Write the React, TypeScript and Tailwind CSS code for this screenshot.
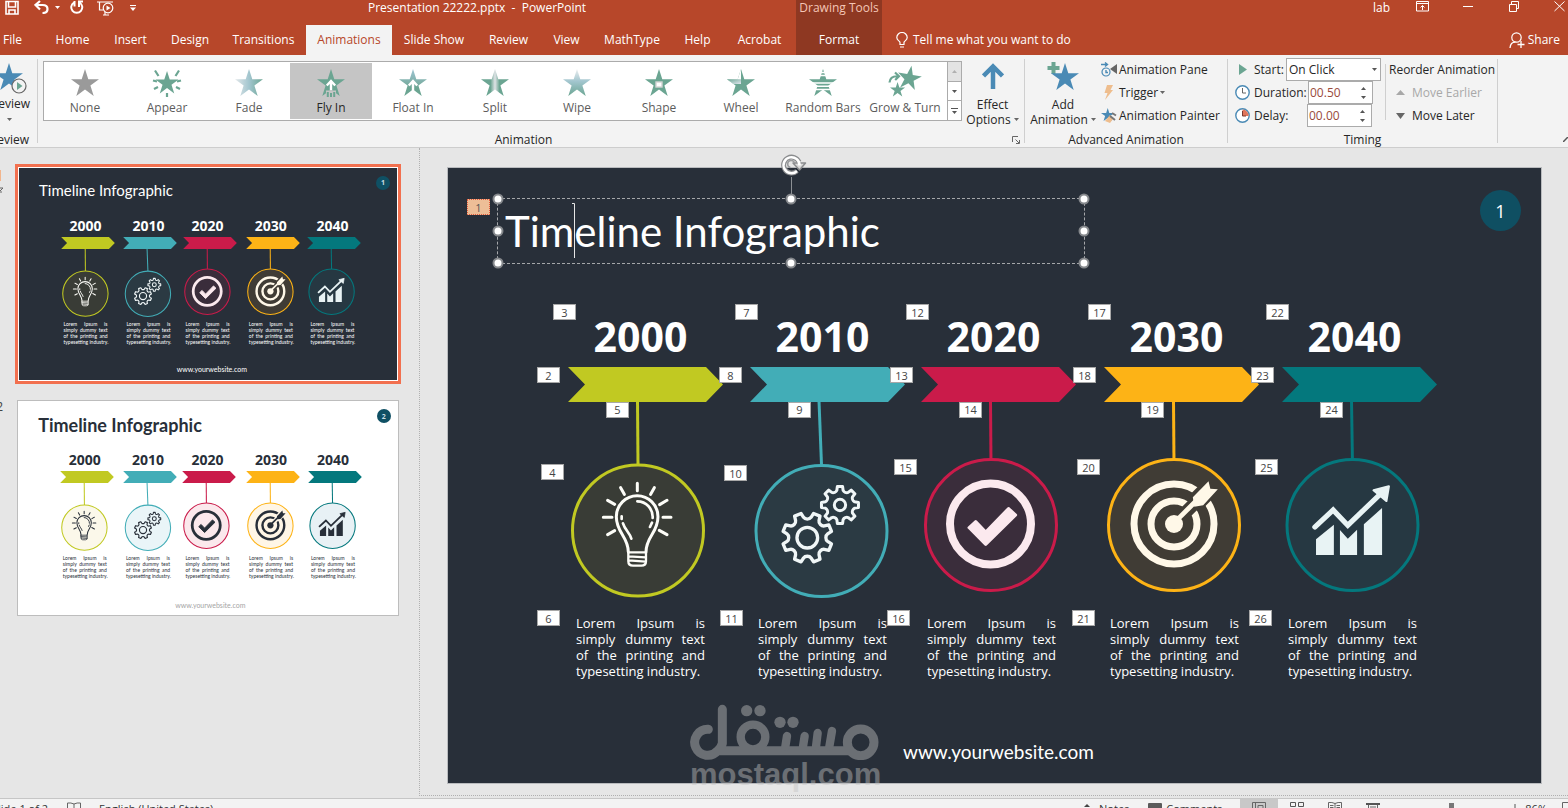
import React from "react";

const STAR = "14,0 17.3,10.2 28,10.2 19.4,16.6 22.7,27 14,20.6 5.3,27 8.6,16.6 0,10.2 10.7,10.2";
const GREEN = "#6ba592";
const BLUE = "#4a8ab5";

/* ---------- ribbon icons ---------- */

type Effect = "None" | "Appear" | "Fade" | "Fly In" | "Float In" | "Split" | "Wipe" | "Shape" | "Wheel" | "Random Bars" | "Grow & Turn";

function EffectIcon({ kind }: { kind: Effect }) {
  const svg = "h-7 w-9 overflow-visible";
  switch (kind) {
    case "None":
      return <svg className={svg} viewBox="-4 0 36 28"><polygon points={STAR} fill="#9a9a9a" /></svg>;
    case "Appear":
      return (
        <svg className={svg} viewBox="-4 0 36 28">
          <polygon points={STAR} fill={GREEN} transform="translate(2.4 2) scale(.83)" />
          <path d="M2 1.5L5.5 7M26 1.5L22.5 7M0 11.5L4 12.5M28 11.5L24 12.5M1 20L5 18M27 20L23 18M14 24V28" stroke={GREEN} strokeWidth="2.2" />
        </svg>
      );
    case "Fade":
      return (
        <svg className={svg} viewBox="-4 0 36 28">
          <defs>
            <linearGradient id="fade"><stop offset="0" stopColor="#e4e8ea" /><stop offset=".5" stopColor="#a3c6cf" /><stop offset="1" stopColor={GREEN} /></linearGradient>
          </defs>
          <polygon points={STAR} fill="url(#fade)" />
        </svg>
      );
    case "Fly In":
      return (
        <svg className={svg} viewBox="-4 0 36 28">
          <polygon points={STAR} fill={GREEN} />
          <rect x="9" y="21.500" width="10" height="6.500" fill="#c5c5c5" />
          <path d="M14 21V13M9.8 16.5L14 12L18.2 16.5" fill="none" stroke="#fff" strokeWidth="2.4" />
          <path d="M10.8 23V28M14 24V28M17.2 23V28" stroke={GREEN} strokeWidth="2" />
        </svg>
      );
    case "Float In":
      return (
        <svg className={svg} viewBox="-4 0 36 28">
          <defs>
            <linearGradient id="float" x2="0" y2="1"><stop offset="0" stopColor="#9cc3d2" /><stop offset=".5" stopColor="#7fb0a8" /><stop offset=".7" stopColor={GREEN} /></linearGradient>
          </defs>
          <polygon points={STAR} fill="url(#float)" />
          <path d="M14 23V13M9.8 16.5L14 12L18.2 16.5" fill="none" stroke="#fff" strokeWidth="2.4" />
        </svg>
      );
    case "Split":
      return (
        <svg className={svg} viewBox="-4 0 36 28">
          <defs>
            <linearGradient id="split"><stop offset=".34" stopColor={GREEN} /><stop offset=".5" stopColor="#dfe3e6" /><stop offset=".66" stopColor={GREEN} /></linearGradient>
          </defs>
          <polygon points={STAR} fill="url(#split)" />
        </svg>
      );
    case "Wipe":
      return (
        <svg className={svg} viewBox="-4 0 36 28">
          <defs>
            <linearGradient id="wipe" x2="0" y2="1"><stop offset="0" stopColor="#eef0f0" /><stop offset=".45" stopColor="#a3c6cf" /><stop offset="1" stopColor={GREEN} /></linearGradient>
          </defs>
          <polygon points={STAR} fill="url(#wipe)" />
        </svg>
      );
    case "Shape":
      return (
        <svg className={svg} viewBox="-4 0 36 28">
          <polygon points={STAR} fill={GREEN} />
          <rect x="11" y="13" width="6" height="5" fill="#fff" stroke="#d5d5d5" strokeWidth="1.4" />
        </svg>
      );
    case "Wheel":
      return (
        <svg className={svg} viewBox="-4 0 36 28">
          <defs>
            <linearGradient id="wheel" x1="0" y1="0" x2="1" y2="1"><stop offset="0" stopColor={GREEN} /><stop offset="1" stopColor="#e1e6ee" /></linearGradient>
          </defs>
          <polygon points={STAR} fill={GREEN} />
          <polygon points="14,0 14,14.5 6,14.5 0,10.2 10.7,10.2" fill="#fff" />
          <polygon points="14,10.2 14,15 6.5,15 0,10.2" fill="url(#wheel)" />
        </svg>
      );
    case "Random Bars":
      return (
        <svg className={svg} viewBox="-4 0 36 28">
          <polygon points={STAR} fill={GREEN} />
          <path d="M8 3.5H20M8 6.5H20M0 14H28M4 17.3H24M4 20.5H24" stroke="#fff" strokeWidth="1.4" />
        </svg>
      );
    default:
      return (
        <svg className={svg} viewBox="-4 0 36 28">
          <polygon points={STAR} fill={GREEN} transform="translate(6 -3) rotate(10 14 14) scale(.86)" />
          <polygon points={STAR} fill={GREEN} transform="translate(-1 13) scale(.54)" />
          <path d="M-1.5 13.5C-1 8.5 2 7 7 7.3M4 3.5L8 7.3L4.2 11" fill="none" stroke={GREEN} strokeWidth="2.2" />
        </svg>
      );
  }
}

function Caret({ className = "" }: { className?: string }) {
  return (
    <svg className={`h-[3px] w-[5px] shrink-0 ${className}`} viewBox="0 0 5 3"><path d="M0 0H5L2.5 3Z" fill="currentColor" /></svg>
  );
}

/* ---------- slide drawing ---------- */

type Item = {
  year: string;
  x: number;
  color: string;
  darkFill: string;
  lightFill: string;
  darkInk: string;
  topX: number;
  cx: number;
  cy: number;
  textPad: string;
  icon: "bulb" | "gears" | "check" | "target" | "chart";
};

const ITEMS: Item[] = [
  { year: "2000", x: 120, color: "#c1c922", darkFill: "#393c36", lightFill: "#fbf8ea", darkInk: "#fdfdf8", topX: 69.5, cx: 70, cy: 163.5, textPad: "pl-2", icon: "bulb" },
  { year: "2010", x: 302, color: "#42adb7", darkFill: "#2b3a43", lightFill: "#eaf5f8", darkInk: "#f0f6f7", topX: 69, cx: 71.5, cy: 164, textPad: "pl-2", icon: "gears" },
  { year: "2020", x: 473, color: "#ca1b4a", darkFill: "#3a2d3b", lightFill: "#fbe8ec", darkInk: "#fbe9ee", topX: 69.5, cx: 70, cy: 158, textPad: "pl-[6px]", icon: "check" },
  { year: "2030", x: 656, color: "#fdb316", darkFill: "#403c35", lightFill: "#fff6e6", darkInk: "#fff8e8", topX: 69.5, cx: 70, cy: 158, textPad: "pl-[6px]", icon: "target" },
  { year: "2040", x: 834, color: "#04787d", darkFill: "#263842", lightFill: "#e8f1f5", darkInk: "#e8f3f4", topX: 69.5, cx: 70.5, cy: 158, textPad: "pl-[6px]", icon: "chart" },
];

function gearPath(cx: number, cy: number, R: number, depth: number, offset: number) {
  const p = (deg: number, r: number) => {
    const a = ((deg + offset - 90) * Math.PI) / 180;
    return `${(cx + r * Math.cos(a)).toFixed(1)} ${(cy + r * Math.sin(a)).toFixed(1)}`;
  };
  let d = "";
  for (let i = 0; i < 8; i++) {
    const a = i * 45;
    d += `${i ? "L" : "M"}${p(a - 8, R)}L${p(a + 8, R)}L${p(a + 12, R - depth)}A${depth} ${depth * 0.8} ${a + offset + 22} 0 0 ${p(a + 33, R - depth)}`;
  }
  return d + "Z";
}

function SlideIcon({ icon, ink, fill }: { icon: Item["icon"]; ink: string; fill: string }) {
  switch (icon) {
    case "bulb":
      return (
        <g transform="translate(-48 33) scale(.3333)" fill="none" stroke={ink} strokeLinecap="round" strokeLinejoin="round">
          <path strokeWidth="9" d="M352 250V272M302 263L313 283M403 263L392 283M263 301L284 313M441 301L419 314M250 352H276M429 352H453M263 404L284 392M441 404L418 391" />
          <path strokeWidth="9" d="M325 456C325 410 289 398 289 350A62.500 62.500 0 0 1 414 350C414 398 378 410 378 456" />
          <path strokeWidth="8" d="M352 304A46 47 0 0 1 398 354M396 368L390 381M305 349V357M309 370C315 390 328 396 334 416" />
          <path strokeWidth="7" d="M325 457H378V484Q378 497 364 497H339Q325 497 325 484ZM326 469L377 472M326 481L377 485" />
        </g>
      );
    case "gears":
      return (
        <g transform="translate(-230 33) scale(.3333)" fill="none" stroke={ink} strokeLinejoin="round">
          <path strokeWidth="10" d={gearPath(862, 413, 75, 13, 22.5)} />
          <circle cx="862" cy="413" r="31" strokeWidth="10" />
          <path strokeWidth="9" d={gearPath(960, 315, 56, 11, 0)} />
          <circle cx="960" cy="315" r="17" strokeWidth="9" />
        </g>
      );
    case "check":
      return (
        <g>
          <circle cx="69.500" cy="157" r="40.500" fill="none" stroke={ink} strokeWidth="8" />
          <g transform="translate(-41 33) scale(.3571 .3333)">
            <polygon points="268,364 296,396 360,325 380,345 296,434 249,383" fill={ink} stroke={ink} strokeWidth="8" strokeLinejoin="round" />
          </g>
        </g>
      );
    case "target":
      return (
        <g>
          <circle cx="70" cy="157" r="40" fill="none" stroke={ink} strokeWidth="7" />
          <circle cx="70" cy="157" r="23" fill="none" stroke={ink} strokeWidth="7" />
          <path d="M92 135L104 123" stroke={fill} strokeWidth="19" />
          <path d="M80 147L92 135" stroke={fill} strokeWidth="13" />
          <circle cx="70" cy="157" r="9" fill={ink} />
          <g transform="translate(-224 33) scale(.3571 .3333)" fill={ink}>
            <path d="M826 366L886 302" stroke={ink} strokeWidth="14" />
            <polygon points="876,292 920,244 925,266 946,268 905,316 880,320" />
          </g>
        </g>
      );
    default:
      return (
        <g transform="translate(-402 33) scale(.3571 .3333)" fill={ink}>
          <polygon points="1221,465 1221,418 1271,374 1271,465" />
          <polygon points="1288,465 1288,390 1310,416 1336,389 1336,465" />
          <polygon points="1355,465 1355,373 1406,324 1406,465" />
          <path d="M1218 381L1269 330L1310 376L1402 281" fill="none" stroke={ink} strokeWidth="15" strokeLinecap="round" />
          <polygon points="1382,271 1425,259 1418,303" stroke={ink} strokeWidth="6" strokeLinejoin="round" />
        </g>
      );
  }
}

function Column({ item, light, mini }: { item: Item; light: boolean; mini: boolean }) {
  const fill = light ? item.lightFill : item.darkFill;
  const ink = light ? "#282f39" : item.darkInk;
  return (
    <div className={mini ? "w-[54px]" : "w-[155px]"}>
      <h2 className={`text-center font-['Open_Sans',sans-serif] font-bold ${mini ? "pr-1 pb-px text-[14px] leading-5" : "pr-[10px] pb-[2px] text-[41px] leading-[58px]"}`}>{item.year}</h2>
      <svg viewBox="0 0 155 231" className={`block ${mini ? "h-[80px] w-[54px]" : "h-[231px] w-[155px]"}`} aria-hidden="true">
        <path d={`M${item.topX} 34L${item.cx} 98`} stroke={item.color} strokeWidth="3" />
        <polygon points="0,0 138,0 155,17.500 138,35 0,35 17,17.500" fill={item.color} />
        <circle cx={item.cx} cy={item.cy} r="65.500" fill={fill} stroke={item.color} strokeWidth="3" />
        <SlideIcon icon={item.icon} ink={ink} fill={fill} />
      </svg>
      <p className={mini ? "mt-1 w-[47px] pl-[3px] font-['Lato',sans-serif] text-[5px] leading-[6px]" : `mt-[17px] font-['Open_Sans',sans-serif] text-[13px] leading-4 ${item.textPad}`}>
        <span className={`block whitespace-nowrap [text-align-last:justify] ${mini ? "" : "w-[129px]"}`}>Lorem Ipsum is</span>
        <span className={`block whitespace-nowrap [text-align-last:justify] ${mini ? "" : "w-[129px]"}`}>simply dummy text</span>
        <span className={`block whitespace-nowrap [text-align-last:justify] ${mini ? "" : "w-[129px]"}`}>of the printing and</span>
        <span className="block whitespace-nowrap">typesetting industry.</span>
      </p>
    </div>
  );
}

const SLIDE_W = 1093;
const SLIDE_H = 615;
const at = (x: number, y: number) => ({ left: `${(x / SLIDE_W) * 100}%`, top: `${(y / SLIDE_H) * 100}%` });

function Columns({ light, mini }: { light: boolean; mini: boolean }) {
  return (
    <>
      {ITEMS.map((item) => (
        <div key={item.year} className="absolute" style={at(item.x, 139)}>
          <Column item={item} light={light} mini={mini} />
        </div>
      ))}
    </>
  );
}

function Thumbnail({ light, number }: { light: boolean; number: number }) {
  return (
    <div className={`relative aspect-[379/213] w-full ${light ? "bg-white text-[#282f39]" : "bg-[#282f39] text-white"}`}>
      <h3 className={`absolute font-['Lato',sans-serif] whitespace-nowrap ${light ? "text-[18px] leading-5 font-bold" : "text-[15px] leading-5"}`} style={at(58, light ? 40 : 35)}>
        Timeline Infographic
      </h3>
      <span className="absolute flex size-[14px] items-center justify-center rounded-full bg-[#0f5064] text-[7px] leading-none font-bold text-[#c9dde2]" style={at(1032, 23)}>{number}</span>
      <Columns light={light} mini />
      <p className={`absolute font-['Lato',sans-serif] text-[7px] leading-[9px] ${light ? "text-[#a5a5a5]" : "text-white"}`} style={at(light ? 452 : 456, light ? 576 : 570)}>www.yourwebsite.com</p>
    </div>
  );
}

const TAGS: [number, number, number][] = [
  [2, 89, 199], [3, 105, 136], [4, 93, 296], [5, 158, 234], [6, 89, 442],
  [7, 287, 136], [8, 271, 199], [9, 340, 234], [10, 276, 297], [11, 272, 442],
  [12, 458, 136], [13, 442, 199], [14, 511, 234], [15, 446, 291], [16, 439, 442],
  [17, 640, 136], [18, 625, 199], [19, 693, 234], [20, 629, 291], [21, 624, 442],
  [22, 818, 136], [23, 803, 199], [24, 872, 234], [25, 807, 291], [26, 801, 442],
];

const HANDLES = [[0, 0], [50, 0], [100, 0], [0, 50], [100, 50], [0, 100], [50, 100], [100, 100]];

function MainSlide() {
  return (
    <div className="relative aspect-[1095/617] w-full border border-[#b9bbbe] bg-[#282f39] text-white">
      <span className="absolute flex size-[41px] items-center justify-center rounded-full bg-[#0f4f62] text-[18px] leading-none" style={at(1032, 22)}>1</span>

      <Columns light={false} mini={false} />

      {TAGS.map(([n, x, y]) => (
        <button key={n} className="absolute flex h-4 w-[23px] items-center justify-center border border-[#a8a8a8] bg-white text-[11px] leading-none text-[#444]" style={at(x, y)}>{n}</button>
      ))}
      <button className="absolute flex h-4 w-[23px] items-center justify-center border border-dotted border-[#e2593a] bg-[#edbe97] text-[11px] leading-none text-[#555]" style={at(19, 31)}>1</button>

      <div className="absolute h-[66px] w-[588px] border border-dashed border-[#a5a7aa]" style={at(49, 30)}>
        <h1 className="pl-[7px] font-['Lato',sans-serif] text-[42px] leading-[64px] whitespace-nowrap">Timeline Infographic</h1>
        <svg className="absolute top-1 left-[74px] h-[56px] w-[4px]" viewBox="0 0 4 56" aria-hidden="true"><path d="M0 .5H2.500V55" fill="none" stroke="#e6e6e6" /></svg>
        <span className="absolute -top-[22px] left-1/2 h-[22px] w-px bg-[#8c9094]" />
        <svg className="absolute -top-[46px] left-1/2 ml-[-10px] h-6 w-[27px]" viewBox="0 0 27 24" aria-hidden="true">
          <g fill="none" strokeLinejoin="round">
            <path d="M16 18A8 8 0 1 1 18 9" stroke="#8a8c8e" strokeWidth="5" />
            <path d="M12 10H24.500L18.500 17Z" fill="#d9d9d9" stroke="#8a8c8e" strokeWidth="1.500" />
            <path d="M16 18A8 8 0 1 1 18.500 12.500" stroke="#fff" strokeWidth="2.500" />
            <path d="M9.500 14.500A3.500 3.500 0 1 1 13.500 10" stroke="#9a9c9e" strokeWidth="1.500" />
          </g>
        </svg>
        {HANDLES.map(([x, y]) => (
          <span key={`${x}-${y}`} className="absolute size-[11px] -translate-x-1/2 -translate-y-1/2 rounded-full border-2 border-[#85888c] bg-white" style={{ left: `${x}%`, top: `${y}%` }} />
        ))}
      </div>

      <p className="absolute font-['Lato',sans-serif] text-[19px] leading-6 whitespace-nowrap" style={at(455, 572)}>www.yourwebsite.com</p>

      <div className="absolute text-[#c3c3c3] opacity-[.43]" style={at(242, 536)}>
        <svg className="block h-14 w-[189px]" viewBox="148 42 567 168" aria-label="مستقل" role="img">
          <g fill="none" stroke="currentColor" strokeLinecap="round">
            <path strokeWidth="27" d="M203 118A39 39 0 1 0 231 182H625M245 58V160A40 40 0 0 1 231 182" strokeLinejoin="round" />
            <circle cx="337" cy="141" r="37" strokeWidth="25" />
            <circle cx="660" cy="157" r="40" strokeWidth="27" />
            <path strokeWidth="25" d="M439 138L434 170M492 138L487 170M531 129L526 170M574 123L566 170" />
          </g>
          <g fill="currentColor">
            <circle cx="318" cy="62" r="17" /><circle cx="358" cy="62" r="17" /><circle cx="418" cy="97" r="17" /><circle cx="457" cy="97" r="17" />
          </g>
        </svg>
        <p className="font-['Liberation_Sans',sans-serif] text-[31px] leading-[30px] font-bold">mostaql.com</p>
      </div>
    </div>
  );
}

/* ---------- window chrome ---------- */

function TitleBar() {
  return (
    <div className="flex h-[25px] items-start text-[12px] leading-4">
      <div className="flex w-[368px] shrink-0 items-start gap-[10px] pl-[5px]">
        <button aria-label="Save"><svg className="h-[15px] w-[14px]" viewBox="0 0 14 15"><path d="M1 1.500H13V14H1ZM3.500 1.500V7H10.500V1.500M4 14V10H10V14" fill="none" stroke="#fff" strokeWidth="1.600" /></svg></button>
        <button aria-label="Undo" className="flex items-center gap-[6px] pl-[5px]">
          <svg className="h-[14px] w-[15px]" viewBox="0 0 15 14"><path d="M6 1L1.500 5L6 9.500M2 5H8.500Q13.500 5 13.500 9T8.500 13" fill="none" stroke="#fff" strokeWidth="2.200" /></svg>
          <Caret />
        </button>
        <button aria-label="Repeat"><svg className="h-[15px] w-[14px]" viewBox="0 0 14 15"><path d="M9.500 2.500A5.500 5.500 0 1 1 4 2.500M4.500 1V6.500M9 7V1.500H13" fill="none" stroke="#fff" strokeWidth="2" /></svg></button>
        <button aria-label="Start from beginning" className="pl-[3px]"><svg className="h-4 w-[17px]" viewBox="0 0 17 16"><path d="M0 2H16M2.500 2V10H6M6 15H12M8 12V15" fill="none" stroke="#fff" strokeWidth="1.200" /><circle cx="11" cy="8" r="4.800" fill="#b7472a" stroke="#fff" strokeWidth="1.200" /><path d="M9.500 5.500L13.500 8L9.500 10.500Z" fill="#fff" /></svg></button>
        <button aria-label="Customize toolbar" className="pt-[5px] pl-[6px]"><svg className="block h-[6px] w-[6px]" viewBox="0 0 6 6"><path d="M0 .5H6" stroke="#fff" /><path d="M0 2.500H6L3 6Z" fill="#fff" /></svg></button>
      </div>
      <div className="w-[428px] shrink-0 whitespace-pre">Presentation 22222.pptx  -  PowerPoint</div>
      <div className="h-[25px] w-[86px] shrink-0 bg-[#8e3822] text-center text-[#f4c6b6]">Drawing Tools</div>
      <div className="flex flex-1 items-start justify-end">
        <span className="pr-[26px]">lab</span>
        <button aria-label="Ribbon options" className="pr-[34px]"><svg className="h-3 w-[13px]" viewBox="0 0 13 12"><path d="M.5 1.500H12.500V11H.5ZM.5 3.500H12.500M6.500 10V5.500M4.500 7.500L6.500 5.500L8.500 7.500" fill="none" stroke="#fff" /></svg></button>
        <button aria-label="Minimize" className="pr-[36px]"><svg className="h-3 w-[10px]" viewBox="0 0 10 12"><path d="M0 6.500H10" stroke="#fff" /></svg></button>
        <button aria-label="Restore" className="pr-[35px]"><svg className="h-3 w-[10px]" viewBox="0 0 10 12"><path d="M.5 4.500H7.500V11.500H.5ZM2.500 4.500V1.500H9.500V8.500H7.500" fill="none" stroke="#fff" /></svg></button>
        <button aria-label="Close" className="pr-[3px]"><svg className="h-3 w-[11px]" viewBox="0 0 11 12"><path d="M.5 1.500L10.500 11M10.500 1.500L.5 11" stroke="#fff" /></svg></button>
      </div>
    </div>
  );
}

const TABS: [string, string][] = [
  ["File", "w-[43px] pr-[18px]"],
  ["Home", "w-[59px]"],
  ["Insert", "w-[57px]"],
  ["Design", "w-[62px]"],
  ["Transitions", "w-[85px]"],
  ["Animations", "w-[86px] bg-[#f3f3f3] text-[#b7472a]"],
  ["Slide Show", "w-[84px]"],
  ["Review", "w-[65px]"],
  ["View", "w-[51px]"],
  ["MathType", "w-[80px]"],
  ["Help", "w-[51px]"],
  ["Acrobat", "w-[73px]"],
  ["Format", "w-[86px] bg-[#8e3822]"],
];

function TabRow() {
  return (
    <nav className="flex h-[30px] text-[12px]">
      {TABS.map(([name, look]) => (
        <button key={name} className={`shrink-0 whitespace-nowrap ${look}`}>{name}</button>
      ))}
      <button className="flex shrink-0 items-center gap-[5px] pl-[14px] whitespace-nowrap">
        <svg className="h-4 w-3" viewBox="0 0 12 16"><path d="M4 12.500V10.500C4 9 .8 8.500 .8 5.500A5.200 5 0 0 1 11.200 5.500C11.200 8.500 8 9 8 10.500V12.500ZM4 15H8" fill="none" stroke="#fff" strokeWidth="1.200" /></svg>
        Tell me what you want to do
      </button>
      <button className="ml-auto flex items-center gap-[3px] pr-2">
        <svg className="h-[17px] w-[16px]" viewBox="0 0 16 17"><circle cx="7.500" cy="5.500" r="4.700" fill="none" stroke="#fff" strokeWidth="1.200" /><path d="M1 16Q1.500 10 6.500 10.200M12 9V16M8.500 12.500H15.500" fill="none" stroke="#fff" strokeWidth="1.300" /></svg>
        Share
      </button>
    </nav>
  );
}

const EFFECTS: Effect[] = ["None", "Appear", "Fade", "Fly In", "Float In", "Split", "Wipe", "Shape", "Wheel", "Random Bars", "Grow & Turn"];

function Divider() {
  return <div className="my-1 w-px shrink-0 bg-[#cfcfcf]" />;
}

function Spinner() {
  return (
    <span className="flex w-[17px] flex-col items-center justify-center gap-[6px] text-[#555]">
      <button aria-label="Increase"><Caret className="block rotate-180" /></button>
      <button aria-label="Decrease"><Caret className="block" /></button>
    </span>
  );
}

function Ribbon() {
  return (
    <div className="flex h-[93px] overflow-hidden border-b border-[#cdcdcd] bg-[#f3f3f3] text-[12px] leading-[15px] text-[#262626]">
      <div className="flex w-[37px] shrink-0 flex-col overflow-hidden">
        <button className="flex h-[77px] flex-col items-start pt-2">
          <svg className="h-[32px] w-[27px]" viewBox="0 0 27 32">
            <polygon points={STAR} fill={BLUE} transform="translate(-5 0)" />
            <circle cx="19" cy="23" r="7" fill="#f3f3f3" stroke="#666" strokeWidth="1.200" /><path d="M17 19L22.500 23L17 27Z" fill={GREEN} />
          </svg>
          <span className="mt-px flex w-[30px] justify-end">Preview</span>
          <Caret className="mt-[7px] ml-[7px] text-[#666]" />
        </button>
        <span className="flex w-[29px] justify-end">Preview</span>
      </div>
      <Divider />

      <div className="flex w-[986px] shrink-0 flex-col pl-[5px]">
        <div className="flex h-[77px]">
          <div className="mt-[6px] flex h-[60px] border border-[#ababab] bg-white py-px">
            {EFFECTS.map((e) => (
              <button key={e} className={`flex w-[82px] flex-col items-center pt-[6px] whitespace-nowrap ${e === "Fly In" ? "bg-[#c5c5c5]" : "text-[#5c5c5c]"}`}>
                <EffectIcon kind={e} />
                <span className="mt-[3px] leading-[15px]">{e}</span>
              </button>
            ))}
            <div className="-my-px ml-px flex w-[14px] flex-col divide-y divide-[#ababab] border-l border-[#ababab] text-[#555]">
              <button aria-label="Scroll up" className="flex flex-1 items-center justify-center bg-[#e3e3e3] text-[#b0b0b0]"><Caret className="rotate-180" /></button>
              <button aria-label="Scroll down" className="flex flex-1 items-center justify-center"><Caret /></button>
              <button aria-label="More effects" className="flex flex-1 flex-col items-center justify-center gap-[2px]"><span className="h-px w-[7px] bg-[#555]" /><Caret /></button>
            </div>
          </div>
          <button className="flex w-[62px] flex-col items-center pt-2 pr-px whitespace-nowrap">
            <svg className="h-[26px] w-[22px]" viewBox="0 0 22 26"><path d="M11 26V3M1.500 13L11 3.500L20.500 13" fill="none" stroke={BLUE} strokeWidth="4.500" /></svg>
            <span className="mt-2">Effect</span>
            <span className="flex items-center gap-[3px]">Options <Caret className="text-[#666]" /></span>
          </button>
        </div>
        <div className="flex items-center">
          <span className="flex-1 pr-2 text-center">Animation</span>
          <button aria-label="Animation options" className="mr-1"><svg className="h-2 w-2" viewBox="0 0 8 8"><path d="M.5 6V.5H6M3.500 3.500L7 7M7.500 4V7.500H4" fill="none" stroke="#666" /></svg></button>
        </div>
      </div>
      <Divider />

      <div className="flex w-[202px] shrink-0 flex-col">
        <div className="flex h-[77px]">
          <button className="flex w-[76px] shrink-0 flex-col items-center pt-[6px] whitespace-nowrap">
            <svg className="h-[30px] w-[32px]" viewBox="0 0 32 30"><path d="M6.500 1V13M.5 7H12.500" stroke={GREEN} strokeWidth="4" /><polygon points={STAR} fill={BLUE} transform="translate(4 2)" /></svg>
            <span className="mt-[6px]">Add</span>
            <span className="flex items-center gap-[3px]">Animation <Caret className="text-[#666]" /></span>
          </button>
          <div className="flex flex-col gap-2 pt-[7px] whitespace-nowrap">
            <button className="flex items-center gap-[2px]">
              <svg className="h-[15px] w-4" viewBox="0 0 16 15"><circle cx="5" cy="10" r="4" fill="none" stroke={BLUE} strokeWidth="1.200" /><path d="M0 2.500H6M4 .5L6.500 2.500L4 4.500M5 8V10.500H7" fill="none" stroke={BLUE} strokeWidth="1.400" /><path d="M16 2V12L9 7Z" fill="#666" /></svg>
              Animation Pane
            </button>
            <button className="flex items-center gap-[2px]">
              <svg className="h-[15px] w-4" viewBox="0 0 16 15"><path d="M6 0H12L9.500 5H12L4 15L6.500 8H3.500Z" fill="#eebd8d" /></svg>
              Trigger <Caret className="text-[#666]" />
            </button>
            <button className="flex items-center gap-[2px]">
              <svg className="h-[15px] w-4" viewBox="0 0 16 15"><polygon points={STAR} fill={BLUE} transform="scale(.48)" /><path d="M4 13L9 7L12 11L9 15Z" fill="#eebd8d" /><path d="M9 8L14 12M11 5L15 7.500" fill="none" stroke="#777" strokeWidth="2" /></svg>
              Animation Painter
            </button>
          </div>
        </div>
        <span className="text-center">Advanced Animation</span>
      </div>
      <Divider />

      <div className="flex w-[269px] shrink-0 flex-col">
        <div className="flex h-[77px] pt-[3px]">
          <div className="flex w-[153px] shrink-0 flex-col pl-[7px]">
            <div className="flex h-[23px] items-center">
              <svg className="h-[15px] w-[19px] shrink-0" viewBox="0 0 19 15"><path d="M4 2L12 7.500L4 13Z" fill={GREEN} /></svg>
              <label htmlFor="start" className="w-[32px] shrink-0">Start:</label>
              <div className="relative h-[23px] w-[95px]">
                <select id="start" defaultValue="On Click" className="h-full w-full appearance-none border border-[#ababab] bg-white pl-[2px] leading-[15px]">
                  <option>On Click</option>
                  <option>With Previous</option>
                  <option>After Previous</option>
                </select>
                <Caret className="pointer-events-none absolute top-[10px] right-[4px] text-[#555]" />
              </div>
            </div>
            <div className="flex h-[23px] items-center">
              <svg className="h-[15px] w-[19px] shrink-0" viewBox="0 0 19 15"><circle cx="7.500" cy="7.500" r="6.700" fill="#fff" stroke={BLUE} strokeWidth="1.400" /><path d="M7.500 3V8H11" fill="none" stroke="#666" /></svg>
              <label htmlFor="duration" className="w-[54px] shrink-0">Duration:</label>
              <div className="flex h-[23px] w-[65px] border border-[#ababab] bg-white">
                <input id="duration" defaultValue="00.50" className="w-[46px] bg-transparent pl-px text-[#9a4a3c] outline-none" />
                <Spinner />
              </div>
            </div>
            <div className="flex h-[23px] items-center">
              <svg className="h-[15px] w-[19px] shrink-0" viewBox="0 0 19 15"><circle cx="7.500" cy="7.500" r="6.700" fill="#fff" stroke={BLUE} strokeWidth="1.400" /><path d="M7.500 8V1.500A6 6 0 0 1 13.500 8Z" fill="#e0765c" /><path d="M7.500 3V8H11" fill="none" stroke="#7a3a30" /></svg>
              <label htmlFor="delay" className="w-[53px] shrink-0">Delay:</label>
              <div className="flex h-[23px] w-[65px] border border-[#ababab] bg-white">
                <input id="delay" defaultValue="00.00" className="w-[46px] bg-transparent pl-px text-[#9a4a3c] outline-none" />
                <Spinner />
              </div>
            </div>
          </div>
          <div className="mt-[6px] ml-1 h-[56px] w-px shrink-0 bg-[#cfcfcf]" />
          <div className="flex flex-col gap-2 pt-1 pl-[3px] whitespace-nowrap">
            <span>Reorder Animation</span>
            <button className="flex items-center gap-[7px] pl-[7px] text-[#a8a8a8]" disabled><svg className="h-[5px] w-[9px]" viewBox="0 0 9 5"><path d="M0 5L4.500 0L9 5Z" fill="currentColor" /></svg>Move Earlier</button>
            <button className="flex items-center gap-[7px] pl-[7px]"><svg className="h-[6px] w-[9px]" viewBox="0 0 9 6"><path d="M0 0L4.500 6L9 0Z" fill="#666" /></svg>Move Later</button>
          </div>
        </div>
        <span className="text-center">Timing</span>
      </div>
      <Divider />
      <button aria-label="Collapse ribbon" className="mt-auto mb-[5px] ml-auto"><svg className="h-[5px] w-[5px]" viewBox="0 0 5 5"><path d="M0 5L5 0" stroke="#555" strokeWidth="1.500" /></svg></button>
    </div>
  );
}

function StatusBar() {
  return (
    <footer className="h-[10px] shrink-0 overflow-hidden border-t border-[#c6c6c6] bg-[#f3f3f3] text-[11px] leading-[20px] text-[#333]">
      <div className="flex h-[22px] items-start">
        <span className="flex w-[48px] shrink-0 justify-end whitespace-nowrap">Slide 1 of 2</span>
        <svg className="mt-[3px] ml-[19px] h-3 w-[14px]" viewBox="0 0 14 12"><path d="M7 2Q4 .5 .5 1V11H13.500V1Q10 .5 7 2V9" fill="none" stroke="#666" /></svg>
        <span className="ml-[18px] whitespace-nowrap">English (United States)</span>
        <div className="ml-auto flex items-start">
          <button className="flex items-start gap-[9px]"><svg className="mt-[5px] h-3 w-[6px]" viewBox="0 0 6 12"><path d="M0 3L3 0L6 3Z" fill="#444" /></svg>Notes</button>
          <button className="ml-[19px] flex items-start gap-1"><svg className="mt-1 h-3 w-[14px]" viewBox="0 0 14 12"><rect width="14" height="10" rx="1" fill="#5b5b5b" /></svg>Comments</button>
          <button aria-label="Normal view" className="ml-[18px] flex h-[22px] w-[38px] justify-center bg-[#c8c8c8] pt-[3px]"><svg className="h-3 w-[14px]" viewBox="0 0 14 12"><path d="M.5 .5H13.500V11.500H.5ZM3.500 .5V11.500M6 3.500H11V9H6Z" fill="none" stroke="#666" /></svg></button>
          <button aria-label="Slide sorter" className="mt-[3px] ml-[12px]"><svg className="block h-3 w-[14px]" viewBox="0 0 14 12"><path d="M.5 .5H5.500V4.500H.5ZM8.500 .5H13.500V4.500H8.500ZM.5 7.500H5.500V11.500H.5ZM8.500 7.500H13.500V11.500H8.500Z" fill="none" stroke="#555" /></svg></button>
          <button aria-label="Reading view" className="mt-[3px] ml-6"><svg className="block h-3 w-[14px]" viewBox="0 0 14 12"><path d="M7 1.500Q4 0 .5 .5V10.500H13.500V.5Q10 0 7 1.500V10M2 3.500H5.500M2 5.500H5.500M8.500 3.500H12M8.500 5.500H12" fill="none" stroke="#666" /></svg></button>
          <button aria-label="Slide show" className="mt-1 ml-6"><svg className="block h-3 w-[14px]" viewBox="0 0 14 12"><path d="M0 1H14" stroke="#555" strokeWidth="2" /><path d="M2.500 2V8H11.500V2M4 4H10" fill="none" stroke="#666" /></svg></button>
          <span className="mt-1 ml-[69px] h-3 w-[5px] bg-[#777]" />
          <svg className="mt-[5px] ml-[56px] h-[10px] w-[10px]" viewBox="0 0 10 10"><path d="M5 0V10M0 5H10" stroke="#555" /></svg>
          <span className="ml-[5px]">86%</span>
          <svg className="mt-[3px] ml-[15px] h-3 w-[6px]" viewBox="0 0 6 12"><path d="M6 .5H.5V11.500H6" fill="none" stroke="#666" /></svg>
        </div>
      </div>
    </footer>
  );
}

export default function App() {
  return (
    <div className="flex h-screen min-h-[400px] flex-col overflow-hidden bg-[#e6e6e6] font-['Open_Sans','Noto_Sans',sans-serif]">
      <header className="shrink-0 bg-[#b7472a] text-white">
        <TitleBar />
        <TabRow />
        <Ribbon />
      </header>
      <div className="flex min-h-0 flex-1">
        <aside className="flex w-[419px] shrink-0 flex-col gap-4 overflow-hidden pt-4 text-[12px] leading-[14px] text-[#444]">
          <div className="flex">
            <div className="flex w-[15px] shrink-0 flex-col gap-1 pt-[2px]">
              <span className="mt-1 h-[11px] w-px bg-[#f2b58c]" />
              <svg className="h-[9px] w-[3px]" viewBox="0 0 3 9"><path d="M0 3H3L0 6M1 6V8" stroke="#666" fill="none" /></svg>
            </div>
            <button aria-label="Slide 1" className="w-[386px] border-[3px] border-[#f2704f] bg-white p-px text-left">
              <Thumbnail light={false} number={1} />
            </button>
          </div>
          <div className="flex">
            <span className="flex w-[3px] justify-end">2</span>
            <button aria-label="Slide 2" className="ml-[14px] w-[382px] border border-[#bdbdbd] text-left">
              <Thumbnail light number={2} />
            </button>
          </div>
        </aside>
        <main className="mb-[2px] flex-1 overflow-hidden border-b border-l border-dotted border-[#b0b0b0] pt-[19px] pr-[26px] pl-[27px]">
          <MainSlide />
        </main>
      </div>
      <StatusBar />
    </div>
  );
}
